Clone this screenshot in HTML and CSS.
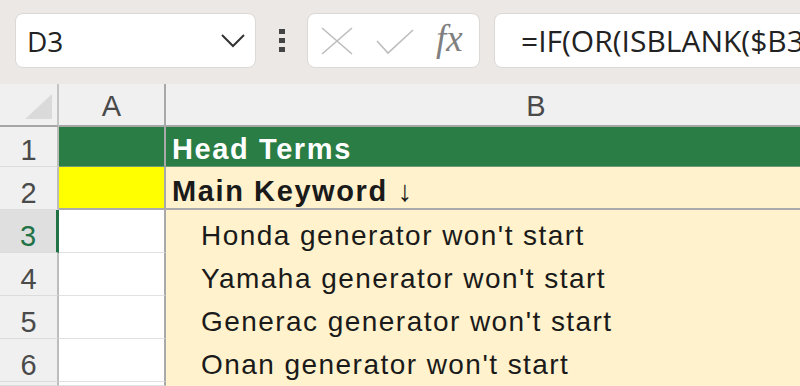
FILE: index.html
```html
<!DOCTYPE html>
<html lang="en">
<head>
  <meta charset="UTF-8">
  <title>Head Terms</title>
  <link rel="stylesheet" href="styles.css">
</head>
<body>

<div class="toolbar">
  <div class="namebox">
    <span>D3</span>
    <svg width="24" height="14" viewBox="0 0 24 14"><polyline points="1,1 12,12 23,1" fill="none" stroke="#333" stroke-width="2"/></svg>
  </div>
  <div class="grip"><i></i><i></i><i></i></div>
  <div class="fxbox">
    <svg class="cancel" width="32" height="28" viewBox="0 0 32 28"><path d="M1 1 L31 27 M31 1 L1 27" stroke="#bdbdbd" stroke-width="1.6" fill="none"/></svg>
    <svg class="enter" width="38" height="26" viewBox="0 0 38 26"><polyline points="1,12 12,24 37,1" fill="none" stroke="#bdbdbd" stroke-width="1.6"/></svg>
    <span class="fx">fx</span>
  </div>
  <div class="formula">=IF(OR(ISBLANK($B3),ISBLANK($C3)),"",$B3&amp;" "&amp;$C3)</div>
</div>

<div class="sheet">
  <div class="corner">
    <svg width="27" height="25" viewBox="0 0 27 25"><polygon points="27,0 27,25 0,25" fill="#dadada"/></svg>
  </div>
  <div class="colhead">A</div>
  <div class="colhead">B</div>

  <div class="rowhead">1</div>
  <div class="cell green"></div>
  <div class="cell green bold">Head Terms</div>

  <div class="rowhead">2</div>
  <div class="cell yellow line"></div>
  <div class="cell beige bold line">Main Keyword ↓</div>

  <div class="rowhead active">3</div>
  <div class="cell"></div>
  <div class="cell beige indent">Honda generator won't start</div>

  <div class="rowhead">4</div>
  <div class="cell"></div>
  <div class="cell beige indent">Yamaha generator won't start</div>

  <div class="rowhead">5</div>
  <div class="cell"></div>
  <div class="cell beige indent">Generac generator won't start</div>

  <div class="rowhead">6</div>
  <div class="cell"></div>
  <div class="cell beige indent">Onan generator won't start</div>

  <div class="rowhead"></div>
  <div class="cell"></div>
  <div class="cell beige"></div>
</div>

</body>
</html>
```

FILE: styles.css
```css
* {
  box-sizing: border-box;
}
body {
  margin: 0;
  height: 386px;
  overflow: hidden;
  background: #fff;
}
.toolbar {
  height: 84px;
  background: #ece8e6;
  display: flex;
  align-items: flex-start;
  padding: 13px 0 0 15px;
  font-family: "Open Sans", "Noto Sans", sans-serif;
  color: #222;
}
.namebox, .fxbox, .formula {
  height: 55px;
  background: white;
  border: 1px solid #dcd8d6;
  border-radius: 8px;
  display: flex;
  align-items: center;
}
.namebox {
  width: 241px;
  padding: 0 10px 0 11px;
  justify-content: space-between;
  font-size: 28px;
}
.grip {
  margin: 16px 0 0 23px;
  display: flex;
  flex-direction: column;
  gap: 4px;
}
.grip i {
  display: block;
  width: 6px;
  height: 5px;
  background: #444;
}
.fxbox {
  width: 173px;
  margin-left: 22px;
  padding-left: 13px;
}
.fxbox .enter {
  margin-left: 23px;
  margin-top: 2px;
}
.fx {
  margin-left: 22px;
  font-family: "Liberation Serif", serif;
  font-style: italic;
  font-size: 37px;
  color: #7f7f7f;
  margin-top: -4px;
}
.formula {
  flex: 1;
  margin-left: 14px;
  margin-right: -40px;
  padding-left: 26px;
  font-size: 30px;
  white-space: nowrap;
  overflow: hidden;
}

.sheet {
  display: grid;
  grid-template-columns: 59px 107px 742px;
  grid-template-rows: 43px 40px 43px 43px 43px 43px 43px 4px;
  font-family: "Liberation Sans", Arial, sans-serif;
}
.corner {
  background: #f0f0f0;
  border-right: 2px solid #c4c4c4;
  border-bottom: 2px solid #a6a6a6;
  display: flex;
  justify-content: flex-end;
  align-items: flex-end;
  padding: 0 5px 6px 0;
}
.colhead {
  background: #f0f0f0;
  border-right: 2px solid #a9a9a9;
  border-bottom: 2px solid #a6a6a6;
  display: flex;
  justify-content: center;
  align-items: flex-end;
  padding-bottom: 4px;
  font-size: 29px;
  line-height: 1;
  color: #4a4a4a;
}
.rowhead {
  background: #f0f0f0;
  border-right: 2px solid #bdbdbd;
  border-bottom: 1px solid #dcdcdc;
  display: flex;
  justify-content: center;
  align-items: flex-end;
  padding-bottom: 1px;
  font-size: 29px;
  line-height: 1;
  color: #4a4a4a;
}
.rowhead.active {
  background: #dfdfdf;
  color: #217346;
  border-right: 3px solid #1f7244;
}
.cell {
  background: white;
  border-right: 2px solid #a9a9a9;
  border-bottom: 1px solid #e1e1e1;
  display: flex;
  align-items: flex-end;
  padding: 0 0 2px 6px;
  font-size: 28px;
  line-height: 1;
  letter-spacing: 1.45px;
  color: #1a1a1a;
  white-space: nowrap;
  overflow: hidden;
}
.cell.green {
  background: #2a7d44;
  color: white;
  border-bottom: 1px solid #6e9a76;
}
.cell.yellow {
  background: #ffff00;
}
.cell.beige {
  background: #fff2cc;
  border-bottom-color: #fff2cc;
}
.cell.line {
  border-bottom: 2px solid #ababab;
}
.bold {
  font-weight: bold;
  font-size: 29px;
  letter-spacing: 1.6px;
}
.indent {
  padding-left: 35px;
}
```
